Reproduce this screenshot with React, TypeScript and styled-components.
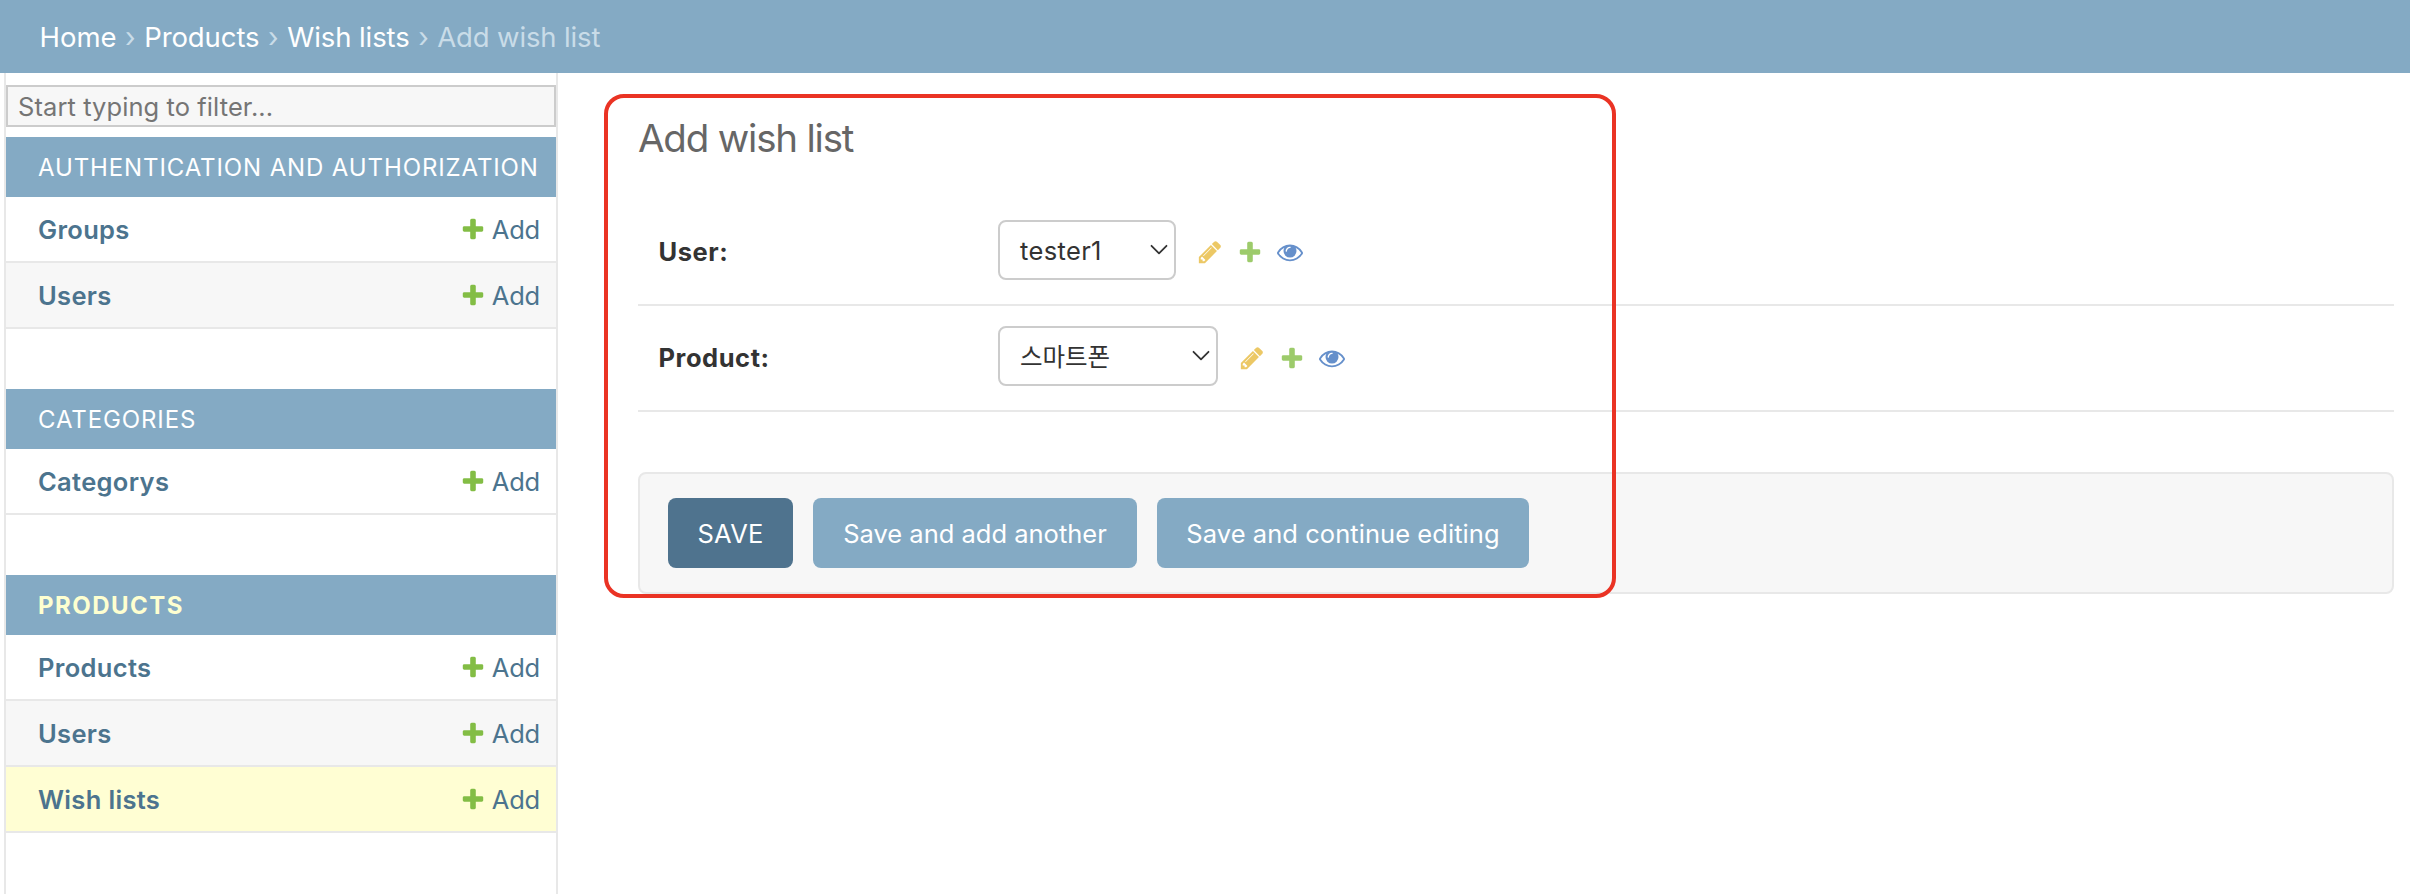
import React from 'react';
import styled, { createGlobalStyle } from 'styled-components';

const GlobalStyle = createGlobalStyle`
  *, *::before, *::after { box-sizing: border-box; }
  body {
    margin: 0;
    background: #fff;
    color: #333;
    font-family: Inter, "Noto Sans CJK KR", sans-serif;
    font-size: 25.5px;
    overflow: hidden;
  }
`;

const Page = styled.div`
  position: relative;
  display: flex;
  flex-direction: column;
  height: 894px;
`;

const Breadcrumbs = styled.nav`
  flex: none;
  display: flex;
  align-items: center;
  gap: 8.8px;
  height: 73px;
  padding-left: 39.5px;
  background: #84aac4;
  color: #c9dce8;
  font-size: 27.5px;
  line-height: 34px;
`;

const Crumb = styled.span<{ $current?: boolean; $track?: number }>`
  color: ${(p) => (p.$current ? '#c9dce8' : '#fff')};
  letter-spacing: ${(p) => p.$track ?? -0.08}px;
`;

const Separator = styled.span`
  width: 10px;
  display: flex;
  justify-content: center;
`;

const Main = styled.div`
  flex: 1;
  display: flex;
  min-height: 0;
`;

const Sidebar = styled.aside`
  flex: none;
  width: 554px;
  margin-left: 4px;
  padding-top: 12px;
  border: solid #e8e8e8;
  border-width: 0 2px;
`;

const Filter = styled.input`
  display: block;
  width: 100%;
  height: 42px;
  margin: 0 0 10px;
  padding: 1px 0 0 10px;
  border: 2px solid #ccc;
  border-radius: 0;
  background: #f7f7f7;
  font: inherit;
  letter-spacing: 0.08px;
  &::placeholder { color: #757575; opacity: 1; }
`;

const Module = styled.section`
  margin-bottom: 60px;
`;

const Caption = styled.h2<{ $active?: boolean }>`
  display: flex;
  align-items: center;
  height: 60px;
  margin: 0;
  padding: 0 0 0 32px;
  background: #84aac4;
  color: ${(p) => (p.$active ? '#feffd0' : '#fff')};
  font-size: 24px;
  font-weight: ${(p) => (p.$active ? 700 : 400)};
  letter-spacing: ${(p) => (p.$active ? 1.45 : 0.88)}px;
  text-transform: uppercase;
  white-space: nowrap;
`;

const ModelRow = styled.div<{ $tone: 'plain' | 'shaded' | 'selected' }>`
  display: flex;
  align-items: center;
  justify-content: space-between;
  height: 66px;
  padding: 0 16px 0 32px;
  border-bottom: 2px solid #e8e8e8;
  background: ${(p) => ({ plain: '#fff', shaded: '#f7f7f7', selected: '#fffed3' })[p.$tone]};
  color: #4c748e;
`;

const ModelName = styled.span`
  font-weight: 600;
  letter-spacing: 0.33px;
`;

const AddLink = styled.span`
  display: flex;
  align-items: center;
  gap: 6px;
  letter-spacing: -0.2px;
`;

const Content = styled.main`
  flex: 1;
  padding: 40px 16px 0 80px;
`;

const Title = styled.h1`
  height: 87px;
  margin: 0;
  color: #666;
  font-size: 38.5px;
  font-weight: 400;
  line-height: 50px;
  letter-spacing: -1.2px;
`;

const FormRow = styled.div`
  display: flex;
  align-items: center;
  height: 106px;
  padding: 0 0 4px 20px;
  border-bottom: 2px solid #e8e8e8;
`;

const Label = styled.label`
  width: 340px;
  padding: 3px 0 0 0.5px;
  font-weight: 700;
  letter-spacing: 0.55px;
`;

const Select = styled.div<{ $width: number }>`
  display: flex;
  align-items: center;
  justify-content: space-between;
  width: ${(p) => p.$width}px;
  height: 60px;
  padding: 0 6px 0 20px;
  border: 2px solid #ccc;
  border-radius: 8px;
`;

const Value = styled.span<{ $korean?: boolean }>`
  padding-top: 2px;
  font-size: ${(p) => (p.$korean ? 24.5 : 25.5)}px;
  letter-spacing: ${(p) => (p.$korean ? 0 : 0.35)}px;
  line-height: 36px;
`;

const RelatedLinks = styled.div`
  display: flex;
  gap: 14px;
  margin-left: 21px;
  padding-top: 4px;
`;

const SubmitRow = styled.div`
  display: flex;
  gap: 20px;
  height: 122px;
  margin-top: 60px;
  padding: 24px 28px;
  border: 2px solid #e8e8e8;
  border-radius: 8px;
  background: #f7f7f7;
`;

const Button = styled.button<{ $primary?: boolean; $width: number; $track: number }>`
  width: ${(p) => p.$width}px;
  height: 70px;
  padding: 0;
  border: 0;
  border-radius: 8px;
  background: ${(p) => (p.$primary ? '#4f738e' : '#84aac4')};
  color: #fff;
  font: inherit;
  letter-spacing: ${(p) => p.$track}px;
  white-space: nowrap;
`;

const Highlight = styled.div`
  position: absolute;
  left: 604px;
  top: 94px;
  width: 1012px;
  height: 504px;
  border: 4px solid #ea3324;
  border-radius: 20px;
  pointer-events: none;
`;

const Glyph = styled.svg`
  flex: none;
  display: block;
`;

const PATHS = {
  add: 'M1600 796v192q0 40-28 68t-68 28h-416v416q0 40-28 68t-68 28h-192q-40 0-68-28t-28-68v-416h-416q-40 0-68-28t-28-68v-192q0-40 28-68t68-28h416v-416q0-40 28-68t68-28h192q40 0 68 28t28 68v416h416q40 0 68 28t28 68z',
  change:
    'M491 1536l91-91-235-235-91 91v107h128v128h107zm523-928q0-22-22-22-10 0-17 7l-542 542q-7 7-7 17 0 22 22 22 10 0 17-7l542-542q7-7 7-17zm-54-192l416 416-832 832h-416v-416zm683 96q0 53-37 90l-166 166-416-416 166-165q36-38 90-38 53 0 91 38l235 234q37 39 37 91z',
  view: 'M1664 960q-152-236-381-353 61 104 61 225 0 185-131.5 316.5t-316.5 131.5-316.5-131.5-131.5-316.5q0-121 61-225-229 117-381 353 133 205 333.5 326.5t434.5 121.5 434.5-121.5 333.5-326.5zm-720-384q0-20-14-34t-34-14q-125 0-214.5 89.5t-89.5 214.5q0 20 14 34t34 14 34-14 14-34q0-86 61-147t147-61q20 0 34-14t14-34zm848 384q0 34-20 69-140 230-376.5 368.5t-499.5 138.5-499.5-139-376.5-368q-20-35-20-69t20-69q140-229 376.5-368t499.5-139 499.5 139 376.5 368q20 35 20 69z',
};

function Icon({ name, color }: { name: keyof typeof PATHS; color: string }) {
  return (
    <Glyph width="26" height="26" viewBox="0 0 1792 1792" fill={color}>
      <path d={PATHS[name]} />
    </Glyph>
  );
}

function Chevron() {
  return (
    <Glyph width="18" height="12" viewBox="0 0 18 12" fill="none" stroke="#333" strokeWidth="1.8" strokeLinecap="round" strokeLinejoin="round">
      <path d="M1.5 1.8L9 9.3L16.5 1.8" />
    </Glyph>
  );
}

const apps = [
  { name: 'Authentication and Authorization', models: ['Groups', 'Users'] },
  { name: 'Categories', models: ['Categorys'] },
  { name: 'Products', models: ['Products', 'Users', 'Wish lists'], active: true },
];

const fields = [
  { label: 'User:', value: 'tester1', width: 178, korean: false },
  { label: 'Product:', value: '스마트폰', width: 220, korean: true },
];

function tone(model: string, index: number) {
  if (model === 'Wish lists') return 'selected';
  return index % 2 ? 'shaded' : 'plain';
}

export default function App() {
  return (
    <Page>
      <GlobalStyle />
      <Breadcrumbs>
        <Crumb $track={0}>Home</Crumb>
        <Separator>›</Separator>
        <Crumb>Products</Crumb>
        <Separator>›</Separator>
        <Crumb>Wish lists</Crumb>
        <Separator>›</Separator>
        <Crumb $current $track={-0.15}>Add wish list</Crumb>
      </Breadcrumbs>
      <Main>
        <Sidebar>
          <Filter placeholder="Start typing to filter..." />
          {apps.map((app) => (
            <Module key={app.name}>
              <Caption $active={app.active}>{app.name}</Caption>
              {app.models.map((model, i) => (
                <ModelRow key={model} $tone={tone(model, i)}>
                  <ModelName>{model}</ModelName>
                  <AddLink>
                    <Icon name="add" color="#83bd45" />
                    Add
                  </AddLink>
                </ModelRow>
              ))}
            </Module>
          ))}
        </Sidebar>
        <Content>
          <Title>Add wish list</Title>
          {fields.map((field) => (
            <FormRow key={field.label}>
              <Label>{field.label}</Label>
              <Select $width={field.width}>
                <Value $korean={field.korean}>{field.value}</Value>
                <Chevron />
              </Select>
              <RelatedLinks>
                <Icon name="change" color="#ecc865" />
                <Icon name="add" color="#9dcb6b" />
                <Icon name="view" color="#6690cb" />
              </RelatedLinks>
            </FormRow>
          ))}
          <SubmitRow>
            <Button $primary $width={125} $track={0.2}>SAVE</Button>
            <Button $width={324} $track={0}>Save and add another</Button>
            <Button $width={372} $track={0.06}>Save and continue editing</Button>
          </SubmitRow>
        </Content>
      </Main>
      <Highlight />
    </Page>
  );
}
